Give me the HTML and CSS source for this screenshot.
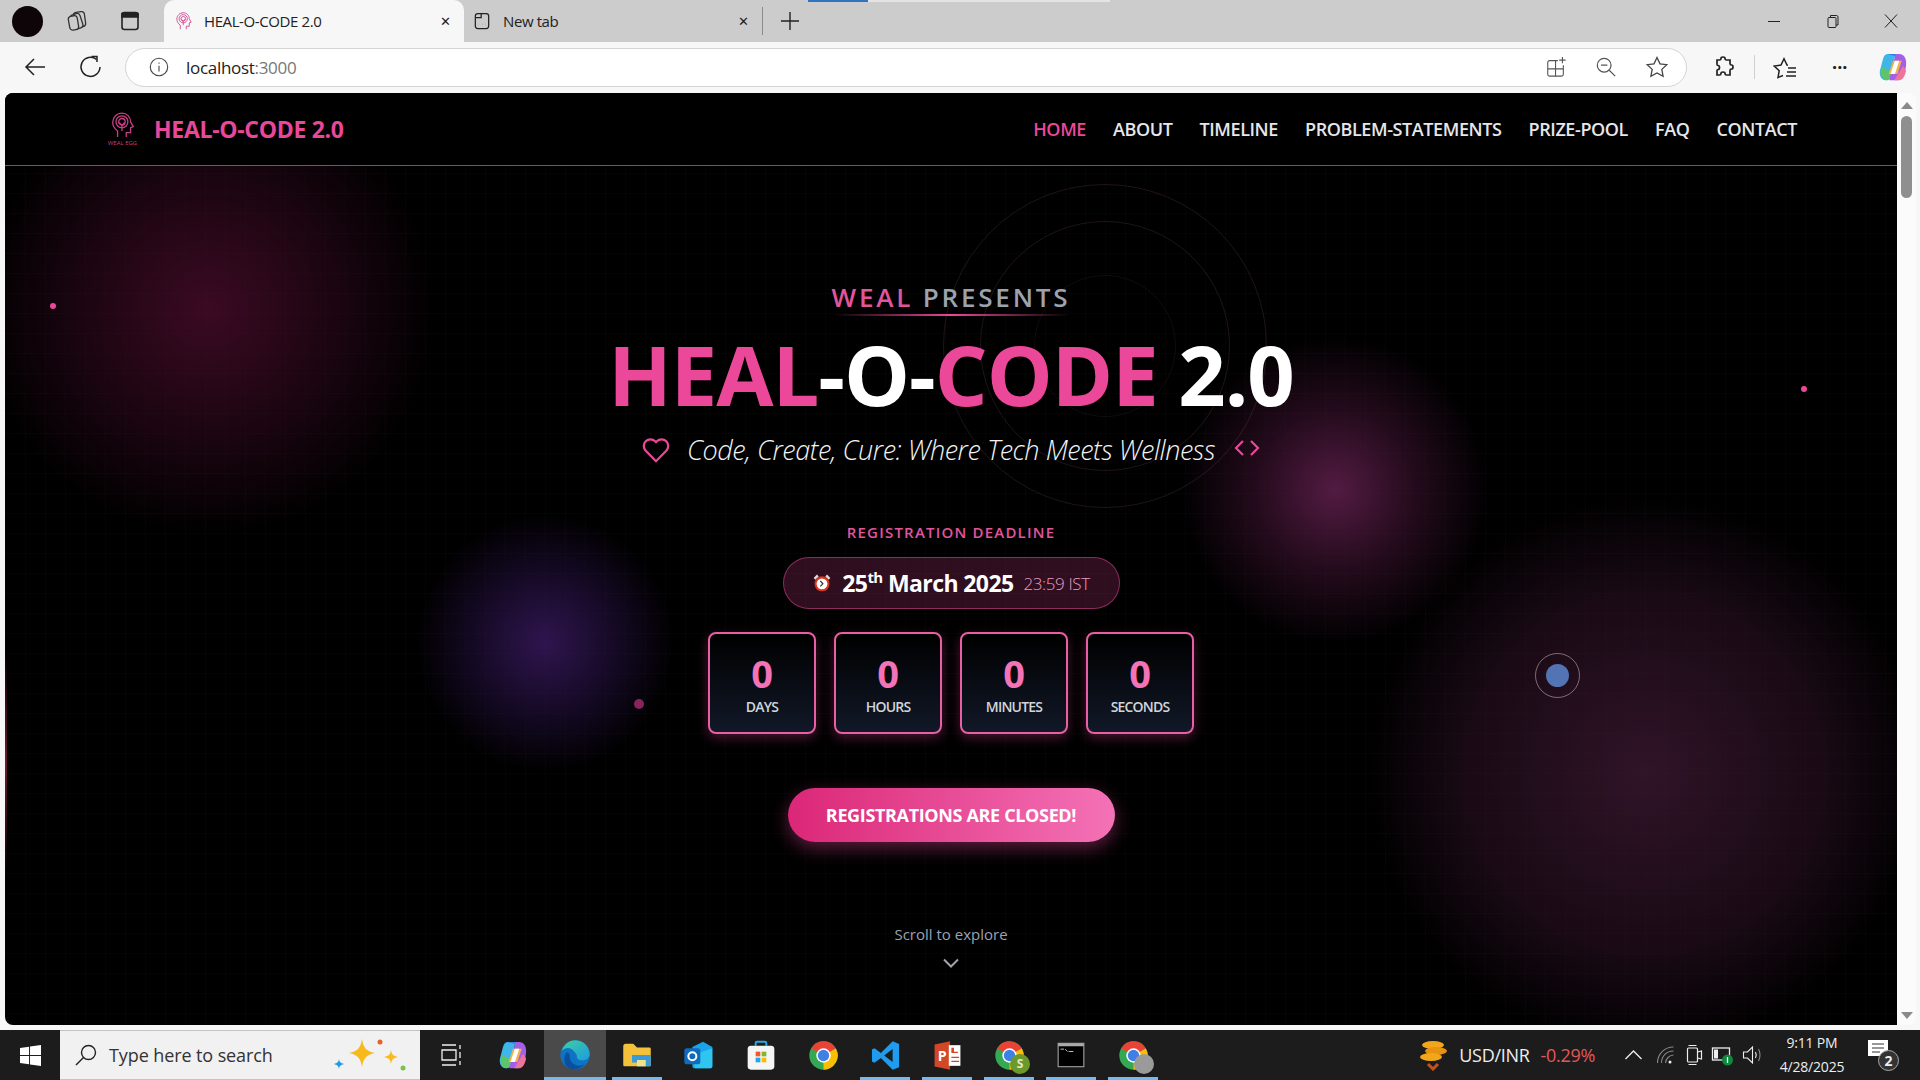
FILE: index.html
```html
<!DOCTYPE html>
<html>
<head>
    <link rel="stylesheet" href="styles.css">
    <title>HEAL-O-CODE 2.0</title>
</head>
<body>
    <svg class="defs" width="0" height="0">
        <symbol id="chrome" viewBox="0 0 24 24">
            <circle cx="12" cy="12" r="11" fill="#34a853"/>
            <path d="M12 12 2.47 6.5A11 11 0 0 1 21.53 6.5Z" fill="#ea4335"/>
            <path d="M12 12 21.53 6.5A11 11 0 0 1 12 23Z" fill="#fbbc04"/>
            <circle cx="12" cy="12" r="5.6" fill="#fff"/>
            <circle cx="12" cy="12" r="4.4" fill="#3f7fe8"/>
        </symbol>
        <symbol id="head" viewBox="0 0 24 24">
            <g fill="none" stroke="currentColor" stroke-width="1.2">
                <path d="M7 23v-5.500C3.500 15 2.500 12 2.500 9.500 2.500 4.500 6.500 1 11 1s8 3.500 8 8l2.500 4.500-2.500 1V19h-4v4"/>
                <circle cx="11" cy="9" r="5.500"/>
                <circle cx="11" cy="9" r="3"/>
                <path d="M11 12.500v5M8.500 9.500 11 12.500 13.500 9.500"/>
            </g>
        </symbol>
        <symbol id="copilot" viewBox="0 0 24 24">
            <path d="M8 1.500h6L10 20c-.4 1.500-1.500 2.500-3 2.500H6C2.500 22.500 1 19 1.500 15L4 5.500C4.600 3 6 1.500 8 1.500z" fill="#3fb6e8"/>
            <path d="M3 12c-2 4-1 10.500 4 10.500 1.500 0 2.600-1 3-2.500l1-4z" fill="#5ec46a"/>
            <path d="M8 1.500h6c2.500 0 4 1 4.500 3.500L15 3.500C12 2.500 10 2.500 8 1.500z" fill="#2f7fe6"/>
            <path d="M14 1.500h3c3.500 0 5.500 3 5.500 7 0 5-1.500 9.500-3 11.500-.8 1.500-2 2.500-3.500 2.500h-7z" fill="#a45ee8"/>
            <path d="M13 22.500h4c3 0 4.500-3.500 5.500-7.500L20 11z" fill="#f0739a"/>
            <path d="M12 7h7l-3.500 10.500H8.500z" fill="#f5b24a"/>
            <path d="M13.500 7h3.500l-3.500 10.500h-3.500z" fill="#fff"/>
        </symbol>
    </svg>

    <div class="tabstrip">
        <span class="profile"></span>
        <svg class="chrome-icon" viewBox="0 0 24 24" width="24" height="24" fill="none" stroke="#333" stroke-width="1.300"><rect x="9" y="3" width="11" height="15" rx="3" transform="rotate(-8 14 10)"/><rect x="6.500" y="5" width="10" height="15" rx="3" transform="rotate(-18 11 12)" fill="#ccc"/><rect x="4" y="7" width="9" height="14" rx="3" transform="rotate(-10 8 14)" fill="#ccc"/></svg>
        <svg class="chrome-icon panes" viewBox="0 0 24 24" width="24" height="24" fill="none" stroke="#222" stroke-width="1.600"><rect x="4" y="3.500" width="16" height="17" rx="2.500"/><path d="M4 4.500h16V8H4z" fill="#222"/></svg>
        <div class="tab tab-active">
            <svg class="favicon" viewBox="0 0 24 24" width="18" height="18"><use href="#head" color="#d6458f"/></svg>
            <span class="tab-title">HEAL-O-CODE 2.0</span>
            <span class="tab-close">✕</span>
        </div>
        <div class="tab tab-plain">
            <svg class="favicon" viewBox="0 0 24 24" width="20" height="20" fill="none" stroke="#222" stroke-width="1.500"><rect x="4" y="3" width="16" height="18" rx="3"/><path d="M4 8h7V3"/><path d="M8 16h.1M12 16h.1M16 16h.1" stroke-width="2"/></svg>
            <span class="tab-title">New tab</span>
            <span class="tab-close">✕</span>
        </div>
        <span class="tab-sep"></span>
        <svg class="newtab" viewBox="0 0 20 20" width="20" height="20" stroke="#222" stroke-width="1.400"><path d="M10 1v18M1 10h18"/></svg>
        <div class="window-btns">
            <svg viewBox="0 0 14 14" width="14" height="14" stroke="#222" fill="none"><path d="M0 7.500h12"/></svg>
            <svg viewBox="0 0 14 14" width="14" height="14" stroke="#222" fill="none"><rect x="2" y="3.500" width="8" height="10" rx="1"/><path d="M4.500 3.500V1.500h6a1.500 1.500 0 0 1 1.500 1.500v8h-2"/></svg>
            <svg viewBox="0 0 14 14" width="14" height="14" stroke="#222" fill="none"><path d="M1 .5 13 13.500M13 .5 1 13.500"/></svg>
        </div>
        <span class="load-bar"></span>
    </div>

    <div class="toolbar">
        <svg class="tool-icon back" viewBox="0 0 24 24" width="24" height="24" fill="none" stroke="#222" stroke-width="1.500"><path d="M22 12H3M11 4l-8 8 8 8"/></svg>
        <svg class="tool-icon reload" viewBox="0 0 24 24" width="24" height="24" fill="none" stroke="#222" stroke-width="1.500"><path d="M17.500 4.500A9.500 9.500 0 1 0 21 12"/><path d="M12.500 1.500h5.500V7"/></svg>
        <div class="address">
            <svg viewBox="0 0 24 24" width="22" height="22" fill="none" stroke="#444" stroke-width="1.200"><circle cx="12" cy="12" r="9.500"/><path d="M12 10.500V17M12 7v1.500"/></svg>
            <span class="url">localhost<span class="url-port">:3000</span></span>
            <div class="address-icons">
                <svg viewBox="0 0 24 24" width="22" height="22" fill="none" stroke="#555" stroke-width="1.200"><path d="M14 5H5a2 2 0 0 0-2 2v13a2 2 0 0 0 2 2h13a2 2 0 0 0 2-2V10M3 14h17M11.500 5v17M19 1v7M15.500 4.500h7"/></svg>
                <svg viewBox="0 0 24 24" width="22" height="22" fill="none" stroke="#555" stroke-width="1.300"><circle cx="10" cy="10" r="7.500"/><path d="M15.500 15.500 22 22M6.500 10h7"/></svg>
                <svg viewBox="0 0 24 24" width="24" height="24" fill="none" stroke="#444" stroke-width="1.300"><path d="m12 2.500 3 6.300 6.800.9-5 4.700 1.300 6.800-6.100-3.300-6.100 3.300 1.300-6.800-5-4.700 6.800-.9z"/></svg>
            </div>
        </div>
        <svg class="tool-icon ext" viewBox="0 0 24 24" width="24" height="24" fill="none" stroke="#222" stroke-width="1.700"><path d="M9 3.500c0-2 4-2 4 0 0 1 .5 1.500 1.500 1.500H18v3.500c0 1 .5 1.500 1.500 1.500 2 0 2 4 0 4-1 0-1.500.5-1.500 1.500V20h-3.500c-1 0-1.500-.5-1.500-1.500 0-2-4-2-4 0 0 1-.5 1.500-1.500 1.500H5v-4c0-1 .5-1.500 1-1.500 2 0 2-4 0-4-.5 0-1-.5-1-1.500V5h2.500C8.500 5 9 4.500 9 3.500z"/></svg>
        <span class="tool-sep"></span>
        <svg class="tool-icon fav" viewBox="0 0 24 24" width="24" height="24" fill="none" stroke="#222" stroke-width="1.500"><path d="M10 20.500 5 22.500l1.200-6.800-5-4.700 6.800-.9 3-6.300 3 6.300 1 .1M15 13h8M14 17h9M13 21h10"/></svg>
        <span class="tool-dots">···</span>
        <svg class="tool-icon copilot-btn" width="30" height="30"><use href="#copilot"/></svg>
    </div>

    <div class="viewport">
        <div class="page">
            <div class="grid-bg"></div>
            <div class="edge-glow"></div>
            <div class="blob blob-one"></div>
            <div class="blob blob-two"></div>
            <div class="blob blob-three"></div>
            <div class="blob blob-four"></div>
            <div class="ring ring-one"></div>
            <div class="ring ring-two"></div>
            <div class="ring ring-three"></div>
            <span class="dot dot-one"></span>
            <span class="dot dot-two"></span>
            <span class="dot dot-three"></span>
            <div class="cursor-ring"><span class="cursor-dot"></span></div>

            <nav class="navbar">
                <div class="brand">
                    <div class="brand-logo">
                        <svg viewBox="0 0 24 24" width="26" height="26"><use href="#head" color="#c93f85"/></svg>
                        <span class="brand-logo-text">WEAL EGG</span>
                    </div>
                    <span class="brand-name">HEAL-O-CODE 2.0</span>
                </div>
                <div class="nav-links">
                    <a class="nav-link nav-active">HOME</a>
                    <a class="nav-link">ABOUT</a>
                    <a class="nav-link">TIMELINE</a>
                    <a class="nav-link">PROBLEM-STATEMENTS</a>
                    <a class="nav-link">PRIZE-POOL</a>
                    <a class="nav-link">FAQ</a>
                    <a class="nav-link">CONTACT</a>
                </div>
            </nav>

            <section class="hero">
                <div class="presents"><span class="pink-soft">WEAL</span> PRESENTS</div>
                <h1 class="title"><span class="pink">HEAL</span>-O-<span class="pink">CODE</span> 2.0</h1>
                <div class="tagline">
                    <svg viewBox="0 0 24 24" width="30" height="30" fill="none" stroke="#ec4899" stroke-width="1.800"><path d="M12 21 3.800 12.600a5.400 5.400 0 0 1 0-7.600 5.300 5.300 0 0 1 7.500 0l.7.700.7-.7a5.300 5.300 0 0 1 7.500 0 5.400 5.400 0 0 1 0 7.600z"/></svg>
                    <span>Code, Create, Cure: Where Tech Meets Wellness</span>
                    <svg class="code-icon" viewBox="0 0 28 20" width="28" height="20" fill="none" stroke="#ec4899" stroke-width="2.200"><path d="M10 3 3 10l7 7M18 3l7 7-7 7"/></svg>
                </div>
                <div class="deadline-label">REGISTRATION DEADLINE</div>
                <div class="deadline-pill">
                    <svg viewBox="0 0 24 24" width="20" height="20"><path d="M3 7 7 3M21 7l-4-4" stroke="#ddd" stroke-width="3"/><circle cx="12" cy="13" r="9" fill="#d8361f"/><circle cx="12" cy="13" r="6.500" fill="#fff"/><path d="M10 9.500 13 13l-3 3" fill="none" stroke="#333" stroke-width="1.500"/></svg>
                    <span class="deadline-date">25<sup>th</sup> March 2025</span>
                    <span class="deadline-time">23:59 IST</span>
                </div>
                <div class="countdown">
                    <div class="count-box"><span class="count-num">0</span><span class="count-label">DAYS</span></div>
                    <div class="count-box"><span class="count-num">0</span><span class="count-label">HOURS</span></div>
                    <div class="count-box"><span class="count-num">0</span><span class="count-label">MINUTES</span></div>
                    <div class="count-box"><span class="count-num">0</span><span class="count-label">SECONDS</span></div>
                </div>
                <a class="closed-button">REGISTRATIONS ARE CLOSED!</a>
                <div class="scroll-hint">Scroll to explore</div>
                <svg class="scroll-arrow" viewBox="0 0 18 12" width="18" height="12" fill="none" stroke="#a3a3ad" stroke-width="2"><path d="M2 2.500 9 9.500l7-7"/></svg>
            </section>
        </div>
        <div class="scrollbar">
            <span class="arrow-up"></span>
            <span class="thumb"></span>
            <span class="arrow-down"></span>
        </div>
    </div>

    <div class="taskbar">
        <div class="start">
            <svg viewBox="0 0 22 22" width="21" height="21" fill="#fff"><path d="M0 3.200 9.500 1.800v8.700H0zM10.500 1.700 22 0v10.500H10.500zM0 11.500h9.500v8.700L0 18.800zM10.500 11.500H22V22l-11.500-1.700z"/></svg>
        </div>
        <div class="search">
            <svg viewBox="0 0 24 24" width="24" height="24" fill="none" stroke="#222" stroke-width="1.400"><circle cx="14.500" cy="9.500" r="7"/><path d="M9.500 14.500 2 22"/></svg>
            <span class="search-text">Type here to search</span>
            <svg class="sparkle" viewBox="0 0 80 40" width="80" height="40"><path d="M32 4c1.500 9 4 12 13 14-9 2-11.500 5-13 14-1.500-9-4-12-13-14 9-2 11.500-5 13-14z" fill="#f8b91c"/><path d="M61 15c.7 4.500 2 6 7 7-5 1-6.300 2.500-7 7-.7-4.500-2-6-7-7 5-1 6.300-2.500 7-7z" fill="#f8b91c"/><path d="M9 24c.5 3 1.500 4 5 5-3.500 1-4.500 2-5 5-.5-3-1.500-4-5-5 3.500-1 4.500-2 5-5z" fill="#1d9be0"/><circle cx="50" cy="7" r="2.500" fill="#e5622d"/><circle cx="73" cy="33" r="2.500" fill="#7cc24a"/></svg>
        </div>
        <div class="slot">
            <svg viewBox="0 0 24 24" width="24" height="24" fill="none" stroke="#eee" stroke-width="1.300"><path d="M3 2h14M3 22h14M3 7h14v10H3zM21 2v4M21 9v6M21 18v4"/></svg>
        </div>
        <div class="slot"><svg width="30" height="30"><use href="#copilot"/></svg></div>
        <div class="slot slot-active">
            <svg viewBox="0 0 24 24" width="32" height="32"><defs><linearGradient id="edgeA" x1="0" y1="0" x2="1" y2="1"><stop offset="0" stop-color="#3fd0a0"/><stop offset="1" stop-color="#1d9be0"/></linearGradient></defs><circle cx="12" cy="12" r="11" fill="#0f73c4"/><path d="M2 9C4 3 9 1 12 1c6 0 11 4.500 11 10.500 0 3-3 5-6 4.500-2.500-.3-4-1.500-3.500-3.500C12 9 8 6 5.500 7 4 7.500 2.800 8 2 9z" fill="url(#edgeA)"/><path d="M8 13c0 4 3 7 7 7 1.500 0 3-.3 4-1-3 4-8 5-12 2.500C4 19.500 3 15 5 11c1-1.500 3-1 3 2z" fill="#0b4f9e"/></svg>
            <span class="run-line"></span>
        </div>
        <div class="slot">
            <svg viewBox="0 0 24 24" width="30" height="30"><path d="M1 5a2 2 0 0 1 2-2h6l3 3h10a1 1 0 0 1 1 1v13a1 1 0 0 1-1 1H2a1 1 0 0 1-1-1z" fill="#f3c13a"/><path d="M8 12h15v9H12v-3H8z" fill="#3b9ad9"/><rect x="12" y="16" width="7" height="5" fill="#f3e08a"/></svg>
            <span class="run-line"></span>
        </div>
        <div class="slot">
            <svg viewBox="0 0 24 24" width="32" height="32"><path d="M7 6l8-4 7 4v14a2 2 0 0 1-2 2H9a2 2 0 0 1-2-2z" fill="#1aa3e8"/><path d="M7 12l15-5v13a2 2 0 0 1-2 2H9z" fill="#30c5ee"/><rect x="1" y="7" width="12" height="12" rx="2" fill="#0f6cbd"/><circle cx="7" cy="13" r="3" fill="none" stroke="#fff" stroke-width="1.500"/></svg>
        </div>
        <div class="slot">
            <svg viewBox="0 0 24 24" width="32" height="32"><path d="M8 5V3a1 1 0 0 1 1-1h6a1 1 0 0 1 1 1v2" fill="none" stroke="#29a9df" stroke-width="1.500"/><rect x="2" y="5" width="20" height="18" rx="2.500" fill="#f5f5f5"/><rect x="8" y="9.500" width="3.500" height="3.500" fill="#ef5a28"/><rect x="12.500" y="9.500" width="3.500" height="3.500" fill="#7cb82f"/><rect x="8" y="14" width="3.500" height="3.500" fill="#1ea7ee"/><rect x="12.500" y="14" width="3.500" height="3.500" fill="#fbbc09"/></svg>
        </div>
        <div class="slot"><svg width="31" height="31"><use href="#chrome"/></svg></div>
        <div class="slot">
            <svg viewBox="0 0 24 24" width="31" height="31"><path d="M17.600 1 8.400 10 3.500 6.300 1.500 7.300v9.400l2 1 4.900-3.700L17.600 23l4.900-2V3zM17.500 7v10l-6.500-5z" fill="#1f9cf0" fill-rule="evenodd"/></svg>
            <span class="run-line"></span>
        </div>
        <div class="slot">
            <svg viewBox="0 0 24 24" width="31" height="31"><path d="M14 1 2 3.500v17L14 23z" fill="#d24726"/><rect x="13" y="4" width="9" height="16" fill="#fff"/><path d="M15 6h2v3h3v1h-5zM15 13h6v1h-6zM15 16h6v1h-6z" fill="#d24726"/><text x="4.500" y="16" class="ppt-letter">P</text></svg>
            <span class="run-line"></span>
        </div>
        <div class="slot">
            <svg width="31" height="31"><use href="#chrome"/></svg>
            <span class="chrome-badge badge-s">S</span>
            <span class="run-line"></span>
        </div>
        <div class="slot">
            <svg viewBox="0 0 24 24" width="28" height="28"><rect x="1" y="2" width="22" height="20" fill="#000" stroke="#999" stroke-width="1"/><rect x="1" y="2" width="22" height="2.500" fill="#aaa"/><path d="M3 7h3M7 7l2 2M10 9h4" stroke="#ccc" stroke-width=".8"/></svg>
            <span class="run-line"></span>
        </div>
        <div class="slot">
            <svg width="31" height="31"><use href="#chrome"/></svg>
            <span class="chrome-badge badge-photo"></span>
            <span class="run-line"></span>
        </div>

        <div class="tray">
            <div class="ticker">
                <svg viewBox="0 0 28 32" width="28" height="32"><ellipse cx="14" cy="6" rx="11" ry="4" fill="#f2a71b"/><ellipse cx="17" cy="12" rx="11" ry="4" fill="#e8920f"/><ellipse cx="12" cy="18" rx="11" ry="4" fill="#f2a71b"/><path d="M9 25l5 5 5-5" fill="none" stroke="#c9501c" stroke-width="3"/></svg>
                <span class="ticker-name">USD/INR</span>
                <span class="ticker-change">-0.29%</span>
            </div>
            <svg class="tray-icon caret" viewBox="0 0 18 12" width="18" height="12" fill="none" stroke="#eee" stroke-width="1.300"><path d="M1 10 9 2l8 8"/></svg>
            <svg class="tray-icon" viewBox="0 0 20 20" width="20" height="20" fill="none" stroke="#888" stroke-width="1.100"><path d="M2 18C2 9 9 2 18 2M6 18C6 11 11 6 18 6M10 18c0-4 4-8 8-8" /><circle cx="14.500" cy="17" r="1.500" fill="#eee" stroke="none"/></svg>
            <svg class="tray-icon" viewBox="0 0 20 22" width="20" height="22" fill="none" stroke="#eee" stroke-width="1.200"><rect x="3" y="4" width="10" height="14" rx="1"/><path d="M13 8l4-1v8l-4-1M4 1.500h8M4 20.500h8"/></svg>
            <svg class="tray-icon" viewBox="0 0 24 22" width="24" height="22" fill="none" stroke="#eee" stroke-width="1.300"><rect x="1" y="4" width="17" height="12"/><rect x="2.500" y="5.500" width="4" height="9" fill="#eee" stroke="none"/><circle cx="16" cy="16" r="5.500" fill="#0c8a3a" stroke="none"/><path d="M16 13v6" stroke="#fff"/></svg>
            <svg class="tray-icon" viewBox="0 0 22 22" width="22" height="22" fill="none" stroke="#eee" stroke-width="1.100"><path d="M2 8h4l5-5v16l-5-5H2z"/><path d="M14 8c1 2 1 4 0 6" /><path d="M17 5c2 4 2 8 0 12" stroke="#888"/></svg>
            <div class="clock"><span>9:11 PM</span><span>4/28/2025</span></div>
            <div class="notify">
                <svg viewBox="0 0 22 20" width="22" height="20"><path d="M0 0h20v16H0z" fill="#fff"/><path d="M4 4h12M4 8h12M4 12h8" stroke="#333" stroke-width="1.200"/></svg>
                <span class="notify-count">2</span>
            </div>
        </div>
    </div>
</body>
</html>
```

FILE: styles.css
```css
* {
    box-sizing: border-box;
}
html, body {
    margin: 0;
    height: 100%;
}
body {
    width: 1920px;
    height: 1080px;
    overflow: hidden;
    display: flex;
    flex-direction: column;
    font-family: "Open Sans", "Noto Sans", sans-serif;
    background-color: #f7f7f7;
}
.defs {
    position: absolute;
}

/* tab strip */
.tabstrip {
    position: relative;
    display: flex;
    align-items: center;
    height: 42px;
    flex-shrink: 0;
    padding-left: 12px;
    background-color: #cccccc;
    color: #222;
}
.profile {
    width: 31px;
    height: 31px;
    border-radius: 50%;
    background-color: #0d0508;
}
.chrome-icon {
    margin-left: 22px;
}
.panes {
    margin-left: 29px;
}
.tab {
    display: flex;
    align-items: center;
    width: 300px;
    height: 42px;
    padding: 0 13px 0 8px;
    font-size: 15px;
    letter-spacing: -0.4px;
}
.tab-active {
    margin-left: 22px;
    padding-left: 11px;
    background-color: #f7f7f7;
    border-radius: 10px 10px 0 0;
}
.tab-plain {
    width: 298px;
}
.tab-title {
    flex: 1;
    margin-left: 11px;
    white-space: nowrap;
}
.tab-close {
    font-size: 13px;
}
.tab-sep {
    width: 1px;
    height: 28px;
    background-color: #8c8c8c;
    margin-left: 0;
}
.newtab {
    margin-left: 17px;
}
.window-btns {
    display: flex;
    gap: 44px;
    margin-left: auto;
    padding-right: 22px;
}
.load-bar {
    position: absolute;
    left: 808px;
    top: 0;
    width: 302px;
    height: 2px;
    background: linear-gradient(to right, #2f74c0 20%, #e4e4e4 20%);
}

/* toolbar */
.toolbar {
    display: flex;
    align-items: center;
    height: 50px;
    flex-shrink: 0;
    padding-left: 23px;
    background-color: #f7f7f7;
}
.reload {
    margin-left: 32px;
}
.address {
    display: flex;
    align-items: center;
    width: 1562px;
    height: 39px;
    margin-left: 22px;
    padding: 0 17px 0 22px;
    background-color: #fff;
    border: 1px solid #d4d4d4;
    border-radius: 20px;
    font-size: 17px;
    letter-spacing: -0.3px;
}
.url {
    margin-left: 16px;
    color: #222;
}
.url-port {
    color: #777;
}
.address-icons {
    display: flex;
    align-items: center;
    gap: 28px;
    margin-left: auto;
}
.ext {
    margin-left: 25px;
}
.tool-sep {
    width: 1px;
    height: 24px;
    margin-left: 18px;
    background-color: #cfcfcf;
}
.fav {
    margin-left: 18px;
}
.tool-dots {
    margin-left: 35px;
    font-size: 18px;
    font-weight: 700;
    color: #222;
}
.copilot-btn {
    margin-left: 31px;
}

/* page viewport */
.viewport {
    display: flex;
    flex: 1;
    min-height: 0;
    padding: 1px 4px 5px 5px;
    background-color: #f7f7f7;
}
.page {
    position: relative;
    flex: 1;
    overflow: hidden;
    background-color: #000;
    border-radius: 8px 0 0 8px;
    color: #fff;
}
.grid-bg {
    position: absolute;
    inset: 0;
    background-image:
        linear-gradient(rgba(236, 72, 153, 0.035) 1px, transparent 1px),
        linear-gradient(90deg, rgba(236, 72, 153, 0.035) 1px, transparent 1px);
    background-size: 20px 20px;
}
.edge-glow {
    position: absolute;
    left: 0;
    top: 560px;
    width: 2px;
    height: 220px;
    background: linear-gradient(to bottom, transparent, rgba(180, 40, 90, 0.6), transparent);
}
.blob {
    position: absolute;
    border-radius: 50%;
}
.blob-one {
    left: -27px;
    top: -14px;
    width: 460px;
    height: 460px;
    background: radial-gradient(circle, rgba(84, 14, 50, 0.7) 0%, rgba(66, 12, 40, 0.4) 40%, transparent 70%);
}
.blob-two {
    left: 1170px;
    top: 237px;
    width: 320px;
    height: 320px;
    background: radial-gradient(circle, rgba(92, 30, 74, 0.9) 0%, rgba(72, 22, 56, 0.5) 35%, transparent 68%);
}
.blob-three {
    left: 410px;
    top: 420px;
    width: 260px;
    height: 260px;
    background: radial-gradient(circle, rgba(58, 26, 98, 0.8) 0%, rgba(44, 20, 78, 0.45) 40%, transparent 70%);
}
.blob-four {
    left: 1360px;
    top: 400px;
    width: 560px;
    height: 560px;
    background: radial-gradient(circle, rgba(68, 28, 56, 0.7) 0%, rgba(56, 22, 46, 0.45) 45%, transparent 70%);
}
.ring {
    position: absolute;
    border-radius: 50%;
    border: 1px solid rgba(236, 150, 190, 0.13);
}
.ring-one {
    left: 938px;
    top: 91px;
    width: 324px;
    height: 324px;
}
.ring-two {
    left: 975px;
    top: 128px;
    width: 250px;
    height: 250px;
}
.ring-three {
    left: 1029px;
    top: 182px;
    width: 142px;
    height: 142px;
    border-color: rgba(236, 150, 190, 0.07);
}
.dot {
    position: absolute;
    border-radius: 50%;
    background-color: #ec4899;
}
.dot-one {
    left: 45px;
    top: 210px;
    width: 6px;
    height: 6px;
}
.dot-two {
    left: 1796px;
    top: 293px;
    width: 6px;
    height: 6px;
}
.dot-three {
    left: 629px;
    top: 606px;
    width: 10px;
    height: 10px;
    background-color: #86245c;
}
.cursor-ring {
    position: absolute;
    left: 1530px;
    top: 560px;
    width: 45px;
    height: 45px;
    display: flex;
    align-items: center;
    justify-content: center;
    border: 1px solid rgba(255, 215, 230, 0.45);
    border-radius: 50%;
}
.cursor-dot {
    width: 23px;
    height: 23px;
    border-radius: 50%;
    background-color: #5273b4;
}

/* navbar */
.navbar {
    position: relative;
    display: flex;
    align-items: center;
    justify-content: space-between;
    height: 73px;
    padding: 0 100px;
    background-color: #000;
    border-bottom: 1px solid #b5336f;
}
.brand {
    display: flex;
    align-items: center;
    gap: 14px;
}
.brand-logo {
    display: flex;
    flex-direction: column;
    align-items: center;
    width: 35px;
    color: #c93f85;
}
.brand-logo-text {
    font-size: 6px;
    white-space: nowrap;
    margin-top: 1px;
}
.brand-name {
    font-size: 23px;
    font-weight: 700;
    letter-spacing: -0.3px;
    color: #e8479a;
}
.nav-links {
    display: flex;
    gap: 27px;
}
.nav-link {
    font-size: 18px;
    font-weight: 600;
    letter-spacing: -0.4px;
    color: #e5e7eb;
}
.nav-active {
    color: #ec4899;
}

/* hero */
.hero {
    position: relative;
    display: flex;
    flex-direction: column;
    align-items: center;
}
.presents {
    margin-top: 113px;
    padding-bottom: 1px;
    font-size: 26px;
    font-weight: 600;
    letter-spacing: 2.8px;
    color: #9ca3af;
    background: linear-gradient(to right, transparent, #ec4899, transparent) bottom / 100% 2px no-repeat;
}
.pink-soft {
    color: #e0559c;
}
.pink {
    color: #ec4899;
}
.title {
    margin: 6px 0 0;
    font-size: 83px;
    line-height: 104px;
    font-weight: 700;
    letter-spacing: -1px;
    color: #fff;
}
.tagline {
    display: flex;
    align-items: center;
    gap: 16px;
    margin-top: 5px;
    font-size: 27px;
    font-weight: 300;
    font-style: italic;
    letter-spacing: -0.45px;
    color: #f3f4f6;
}
.code-icon {
    margin-top: -4px;
    margin-left: 2px;
}
.deadline-label {
    margin-top: 54px;
    font-size: 15px;
    font-weight: 600;
    letter-spacing: 1.2px;
    color: #e0559c;
}
.deadline-pill {
    display: flex;
    align-items: center;
    justify-content: center;
    gap: 10px;
    width: 337px;
    height: 52px;
    margin-top: 15px;
    background-color: rgba(236, 72, 153, 0.2);
    border: 1px solid rgba(236, 72, 153, 0.5);
    border-radius: 26px;
}
.deadline-date {
    font-size: 23px;
    font-weight: 700;
    letter-spacing: -0.6px;
    color: #fff;
}
.deadline-date sup {
    font-size: 15px;
    line-height: 0;
}
.deadline-time {
    font-size: 17px;
    font-weight: 300;
    letter-spacing: -0.4px;
    color: #e79cc3;
}
.countdown {
    display: flex;
    gap: 18px;
    margin-top: 23px;
}
.count-box {
    display: flex;
    flex-direction: column;
    align-items: center;
    justify-content: center;
    width: 108px;
    height: 102px;
    background: linear-gradient(to bottom, #000, #111827);
    border: 2px solid #e85fa5;
    border-radius: 8px;
    box-shadow: 0 4px 12px rgba(236, 72, 153, 0.3);
}
.count-num {
    font-size: 38px;
    line-height: 47px;
    font-weight: 700;
    color: #f472b6;
}
.count-label {
    font-size: 14px;
    line-height: 19px;
    font-weight: 600;
    letter-spacing: -0.8px;
    color: #d1d5db;
}
.closed-button {
    display: flex;
    align-items: center;
    justify-content: center;
    width: 327px;
    height: 54px;
    margin-top: 54px;
    border-radius: 27px;
    background: linear-gradient(to right, #db2777, #f472b6);
    box-shadow: 0 6px 18px rgba(236, 72, 153, 0.4);
    font-size: 18px;
    font-weight: 700;
    letter-spacing: -0.35px;
    color: #fff;
}
.scroll-hint {
    margin-top: 82px;
    font-size: 15px;
    letter-spacing: 0;
    color: #9ca3af;
}
.scroll-arrow {
    margin-top: 13px;
}

/* scrollbar */
.scrollbar {
    position: relative;
    display: flex;
    flex-direction: column;
    align-items: center;
    width: 19px;
    background-color: #fbfbfb;
    border-radius: 0 8px 8px 0;
    padding: 9px 0 6px;
}
.arrow-up {
    width: 0;
    height: 0;
    border-left: 6px solid transparent;
    border-right: 6px solid transparent;
    border-bottom: 7px solid #8a8a8a;
}
.arrow-down {
    width: 0;
    height: 0;
    margin-top: auto;
    border-left: 6px solid transparent;
    border-right: 6px solid transparent;
    border-top: 7px solid #8a8a8a;
}
.thumb {
    width: 11px;
    height: 82px;
    margin-top: 7px;
    border-radius: 6px;
    background-color: #8f8f8f;
}

/* taskbar */
.taskbar {
    display: flex;
    align-items: center;
    height: 50px;
    flex-shrink: 0;
    background-color: #1c1c1c;
    color: #eee;
}
.start {
    display: flex;
    align-items: center;
    justify-content: center;
    width: 60px;
    height: 50px;
}
.search {
    display: flex;
    align-items: center;
    width: 360px;
    height: 50px;
    padding: 0 10px 0 14px;
    background-color: #f1f1f1;
    border-top: 1px solid #c4c4c4;
    border-bottom: 1px solid #c4c4c4;
    color: #333;
}
.search-text {
    margin-left: 11px;
    font-size: 18px;
    letter-spacing: -0.1px;
}
.sparkle {
    margin-left: auto;
}
.slot {
    position: relative;
    display: flex;
    align-items: center;
    justify-content: center;
    width: 62px;
    height: 50px;
}
.slot-active {
    background-color: #4a4a4a;
}
.run-line {
    position: absolute;
    left: 6px;
    right: 6px;
    bottom: 0;
    height: 3px;
    background-color: #76b9ed;
}
.slot-active .run-line {
    left: 0;
    right: 0;
}
.ppt-letter {
    font-size: 11px;
    font-weight: 700;
    fill: #fff;
}
.chrome-badge {
    position: absolute;
    left: 32px;
    top: 24px;
    width: 20px;
    height: 20px;
    border-radius: 50%;
    font-size: 12px;
    font-weight: 700;
    line-height: 20px;
    text-align: center;
}
.badge-s {
    background-color: #6a9a2e;
    color: #dfe9c8;
}
.badge-photo {
    background-color: #9a9a9a;
}
.tray {
    display: flex;
    align-items: center;
    margin-left: auto;
    height: 50px;
}
.ticker {
    display: flex;
    align-items: center;
    margin-right: 24px;
    font-size: 18px;
    letter-spacing: -0.3px;
}
.ticker-name {
    margin-left: 12px;
}
.ticker-change {
    margin-left: 11px;
    color: #e2575a;
}
.tray-icon {
    width: 29px;
}
.caret {
    margin-right: 3px;
}
.clock {
    display: flex;
    flex-direction: column;
    align-items: center;
    width: 74px;
    margin-left: 8px;
    font-size: 14px;
    line-height: 24px;
    letter-spacing: -0.2px;
}
.notify {
    position: relative;
    width: 40px;
    height: 30px;
    margin: 0 12px 0 19px;
}
.notify-count {
    position: absolute;
    left: 10px;
    top: 10px;
    width: 21px;
    height: 21px;
    border: 1px solid #aaa;
    border-radius: 50%;
    background-color: #333;
    font-size: 14px;
    font-weight: 700;
    line-height: 19px;
    text-align: center;
}
```
